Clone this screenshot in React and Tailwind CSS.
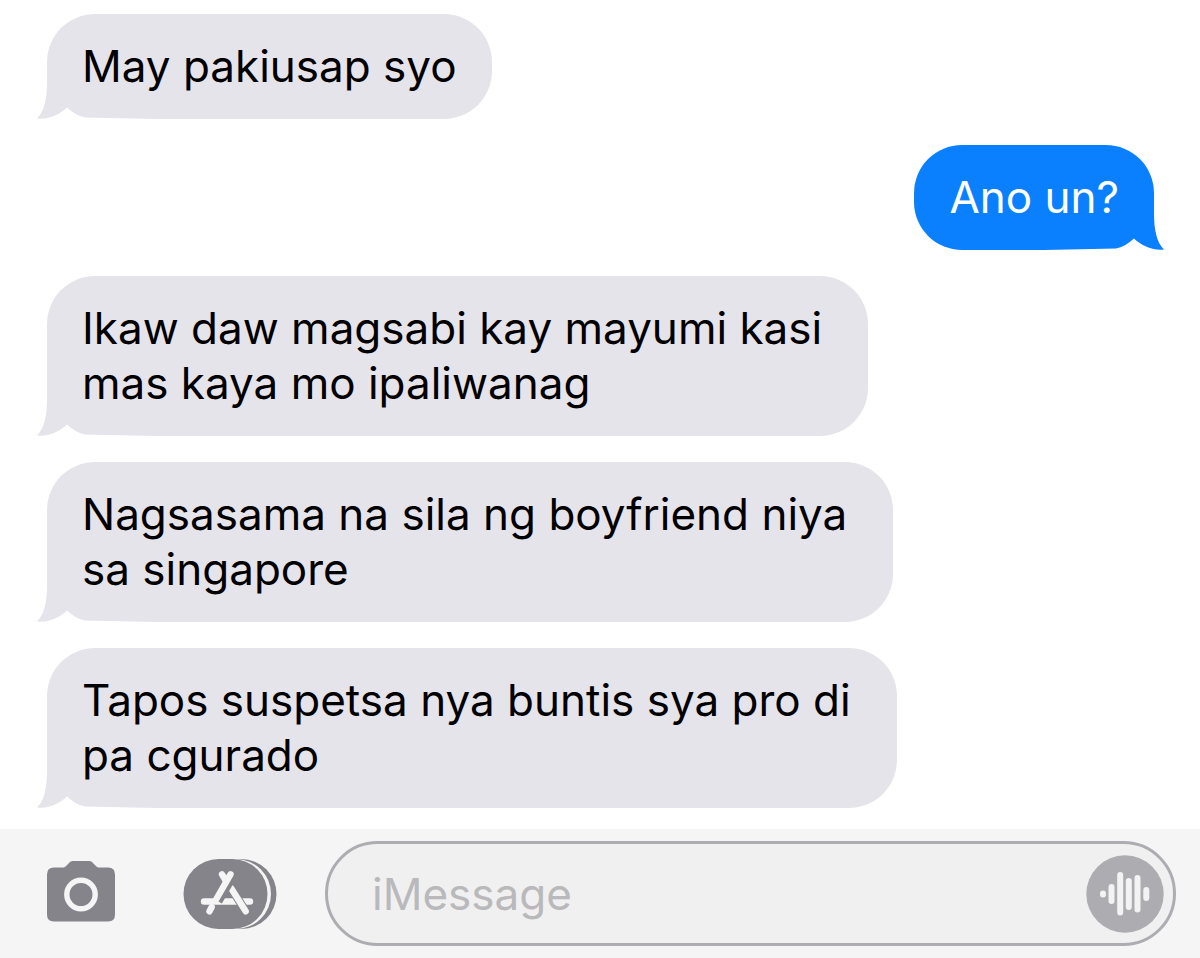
const messages = [
  { id: 1, from: "them", lines: ["May pakiusap syo"] },
  { id: 2, from: "me", lines: ["Ano un?"] },
  { id: 3, from: "them", lines: ["Ikaw daw magsabi kay mayumi kasi", "mas kaya mo ipaliwanag"] },
  { id: 4, from: "them", lines: ["Nagsasama na sila ng boyfriend niya", "sa singapore"] },
  { id: 5, from: "them", lines: ["Tapos suspetsa nya buntis sya pro di", "pa cgurado"] },
];

// Bottom corner of a bubble with its curled tail, drawn for the left side.
function Tail({ mine }) {
  return (
    <svg
      viewBox="0 0 120 48"
      aria-hidden="true"
      className={
        mine
          ? "absolute bottom-0 -right-[10px] h-12 w-[120px] -scale-x-100 text-[#0b80ff]"
          : "absolute bottom-0 -left-[10px] h-12 w-[120px] text-[#e5e4eb]"
      }
    >
      <rect y="2" width="120" height="46" fill="#fff" />
      <path
        d="M10 0V12C10 28 7 41 0 47.600C12 49 23 43 30 36.500C36 42 42 45.500 48 46.500L120 48V0Z"
        fill="currentColor"
      />
    </svg>
  );
}

function Bubble({ from, lines }) {
  const mine = from === "me";
  const side = mine
    ? "relative self-end rounded-[48px] rounded-br-none bg-[#0b80ff] text-white"
    : "relative self-start rounded-[48px] rounded-bl-none bg-[#e5e4eb] text-black";
  const padding = lines.length > 1 ? "py-[25px] pr-[46px] pl-[35px]" : "px-[35px] py-[25px]";
  return (
    <li className={`${side} ${padding}`}>
      <Tail mine={mine} />
      <p className="relative whitespace-pre-line">{lines.join("\n")}</p>
    </li>
  );
}

function CameraIcon() {
  return (
    <svg viewBox="0 0 68 68" aria-hidden="true" className="size-[68px]">
      <path
        d="M7 7.500H15C17 7.500 18 7 19 6L22.500 2.500C23.500 1.500 24.500 1 26 1H42C43.500 1 44.500 1.500 45.500 2.500L49 6C50 7 51 7.500 53 7.500H61Q68 7.500 68 14.500V54.500Q68 61.500 61 61.500H7Q0 61.500 0 54.500V14.500Q0 7.500 7 7.500Z"
        fill="#85848a"
      />
      <circle cx="34" cy="34.500" r="14.200" fill="none" stroke="#f5f5f5" strokeWidth="5.400" />
    </svg>
  );
}

function AppsIcon() {
  return (
    <svg viewBox="0 0 95 72" aria-hidden="true" className="h-[72px] w-[95px]">
      <rect x="10" y="1" width="83.500" height="70" rx="35" fill="#85848a" />
      <rect x="4" y="1" width="84" height="70" rx="35" fill="#f5f5f5" />
      <rect x="0.500" y="1" width="84" height="70" rx="35" fill="#85848a" />
      <g fill="none" strokeLinecap="round" stroke="#f5f5f5" strokeWidth="6.400">
        <path d="M21 43.500H67" />
        <path d="M28.700 49L26.500 53.300" />
        <path d="M48 30L62.700 53.300" stroke="#85848a" strokeWidth="8.400" />
        <path d="M48 30L62.700 53.300" />
        <path d="M46.500 24.500L35.500 43.500" stroke="#85848a" strokeWidth="7.800" strokeLinecap="butt" />
        <path d="M39 16.300L43 23" />
        <path d="M47.500 16.300L32.500 42.500" />
      </g>
    </svg>
  );
}

function AudioIcon() {
  return (
    <svg viewBox="0 0 78 78" aria-hidden="true" className="size-[78px]">
      <circle cx="39" cy="39" r="38.700" fill="#adacb1" />
      <path
        d="M17 38.500V39.500M25.500 32V46M34.200 20V57.500M42.800 26V52M51.500 23V54.500M60.300 35V43"
        fill="none"
        stroke="#f3f3f3"
        strokeWidth="6"
        strokeLinecap="round"
      />
    </svg>
  );
}

export default function App() {
  return (
    <main className="flex min-h-screen flex-col bg-white font-['Inter',sans-serif] text-[44px] leading-[55px]">
      <ol className="flex flex-col gap-[26px] pt-[14px] pr-[46px] pb-[21px] pl-[47px]">
        {messages.map((m) => (
          <Bubble key={m.id} from={m.from} lines={m.lines} />
        ))}
      </ol>
      <form
        className="flex flex-1 items-start bg-[#f5f5f5] pt-3 pr-6 pb-3 pl-[47px]"
        onSubmit={(e) => e.preventDefault()}
      >
        <div className="flex h-[105px] items-center gap-[68px] pr-[47px]">
          <button type="button" aria-label="Camera">
            <CameraIcon />
          </button>
          <button type="button" aria-label="Apps">
            <AppsIcon />
          </button>
        </div>
        <div className="flex h-[105px] min-w-0 flex-1 items-center rounded-full border-3 border-[#adacb1] bg-[#f0f0f0] pr-[9px] pl-11">
          <input
            type="text"
            aria-label="iMessage"
            placeholder="iMessage"
            className="h-14 min-w-0 flex-1 bg-transparent text-black outline-none placeholder:text-[#b9b9bb]"
          />
          <button type="button" aria-label="Record audio">
            <AudioIcon />
          </button>
        </div>
      </form>
    </main>
  );
}
